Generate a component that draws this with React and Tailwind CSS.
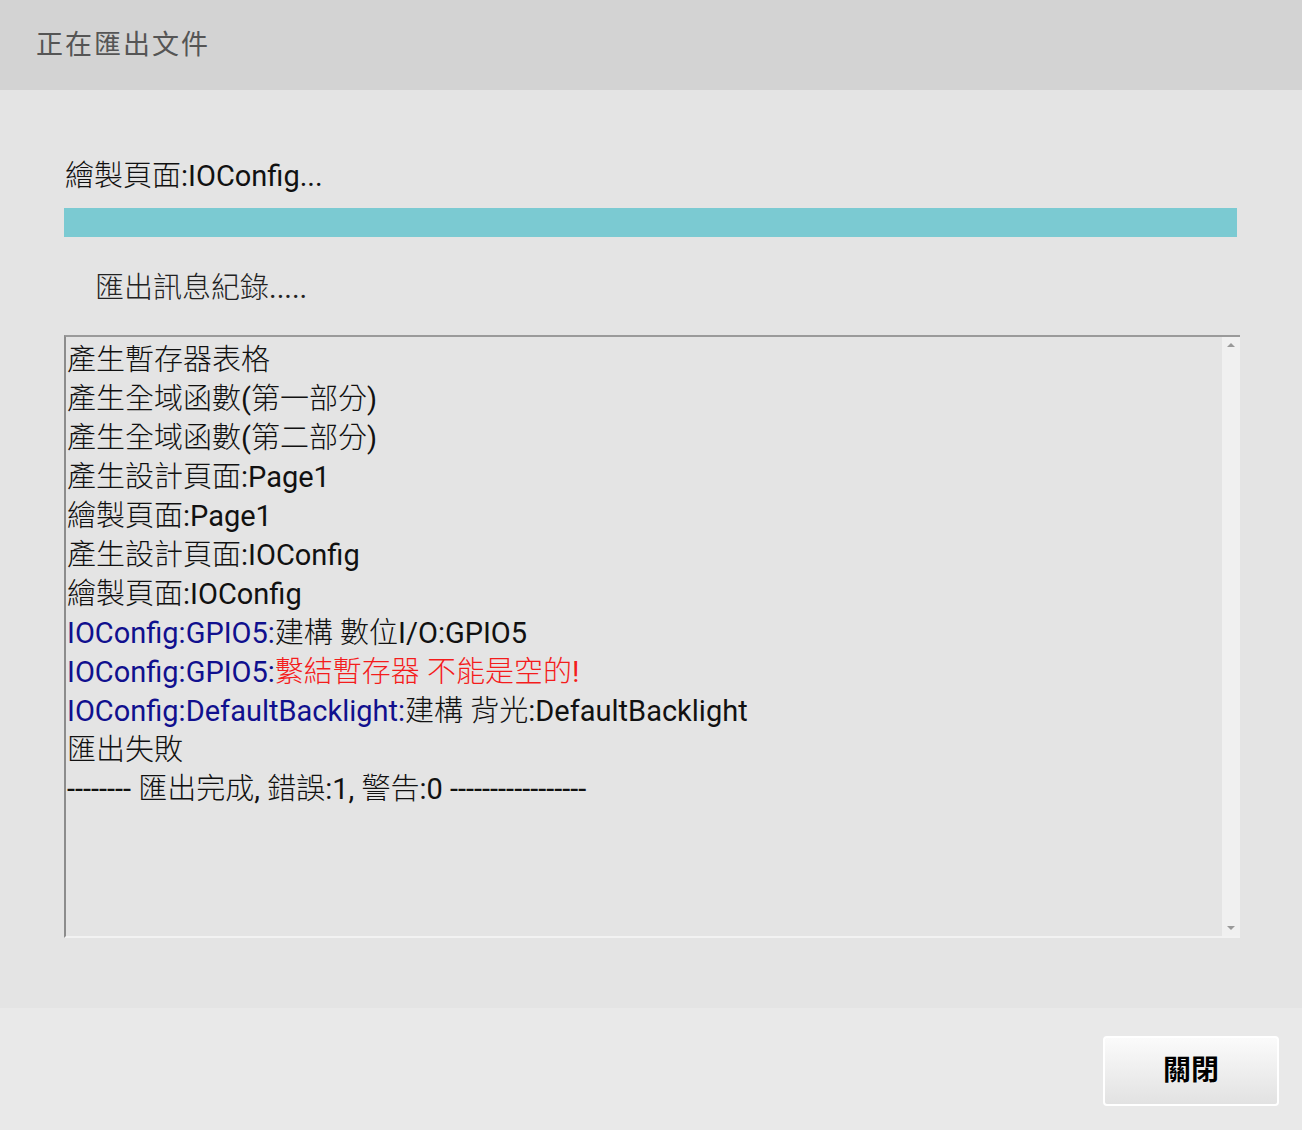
import React from "react";

const F = { fontFamily: 'Roboto, "Noto Sans CJK TC", sans-serif' };

function T({ s }) {
  const parts = s.split(/([\u2E80-\u9FFF\uFF00-\uFFEF]+)/);
  return parts.map((p, i) =>
    i % 2 === 1 ? (
      <span key={i} className="font-light">{p}</span>
    ) : (
      <span key={i}>{p}</span>
    )
  );
}

const lines = [
  [["產生暫存器表格", "k"]],
  [["產生全域函數(第一部分)", "k"]],
  [["產生全域函數(第二部分)", "k"]],
  [["產生設計頁面:Page1", "k"]],
  [["繪製頁面:Page1", "k"]],
  [["產生設計頁面:IOConfig", "k"]],
  [["繪製頁面:IOConfig", "k"]],
  [["IOConfig:GPIO5:", "b"], ["建構 數位I/O:GPIO5", "k"]],
  [["IOConfig:GPIO5:", "b"], ["繫結暫存器 不能是空的!", "r"]],
  [["IOConfig:DefaultBacklight:", "b"], ["建構 背光:DefaultBacklight", "k"]],
  [["匯出失敗", "k"]],
  [["-------- 匯出完成, 錯誤:1, 警告:0 -----------------", "k"]],
];

const color = { k: "text-[#111]", b: "text-[#10108e]", r: "text-[#f41c1c]" };

export default function App() {
  return (
    <div className="w-[1302px] h-[1130px] flex flex-col bg-[#e4e4e4]" style={F}>
      <div className="h-[90px] bg-[#d3d3d3] flex items-center pl-[36px]">
        <span className="text-[27px] tracking-[2px] text-[#555]">正在匯出文件</span>
      </div>
      <div className="h-[918px] flex flex-col pl-[64px] pr-[62px]">
        <div className="mt-[67px] h-[38px] flex items-center pl-[1px] text-[29px] text-[#111] leading-none whitespace-pre">
          <T s="繪製頁面:IOConfig..." />
        </div>
        <div className="mt-[13px] h-[29px] w-[1173px] bg-[#7bcad2]" />
        <div className="mt-[32px] h-[38px] flex items-center pl-[31px] text-[29px] text-[#222] leading-none whitespace-pre">
          <T s="匯出訊息紀錄....." />
        </div>
        <div className="mt-[28px] h-[603px] w-[1176px] flex border-t-2 border-l-2 border-t-[#9a9a9a] border-l-[#8c8c8c] border-b-2 border-b-[#f2f2f2]">
          <div className="flex-1 pt-[4px] pl-[1px]">
            {lines.map((l, i) => (
              <div key={i} className="h-[39px] flex items-center text-[29px] leading-none whitespace-pre">
                {l.map(([t, c], j) => (
                  <span key={j} className={color[c]}><T s={t} /></span>
                ))}
              </div>
            ))}
          </div>
          <div className="w-[18px] bg-[#f0f0f0] flex flex-col items-center justify-between pt-[6px] pb-[6px]">
            <div className="w-0 h-0 border-l-[4px] border-r-[4px] border-b-[4px] border-l-transparent border-r-transparent border-b-[#999]" />
            <div className="w-0 h-0 border-l-[4px] border-r-[4px] border-t-[4px] border-l-transparent border-r-transparent border-t-[#999]" />
          </div>
        </div>
      </div>
      <div className="flex-1 bg-[#e9e9e9] flex justify-end items-start pt-[28px] pr-[23px]">
        <button className="w-[176px] h-[70px] rounded-[4px] border-2 border-white bg-gradient-to-b from-[#fbfbfb] to-[#e2e2e2] flex items-center justify-center text-[28px] font-bold text-black [text-shadow:0_0_2px_#fff]">
          關閉
        </button>
      </div>
    </div>
  );
}
